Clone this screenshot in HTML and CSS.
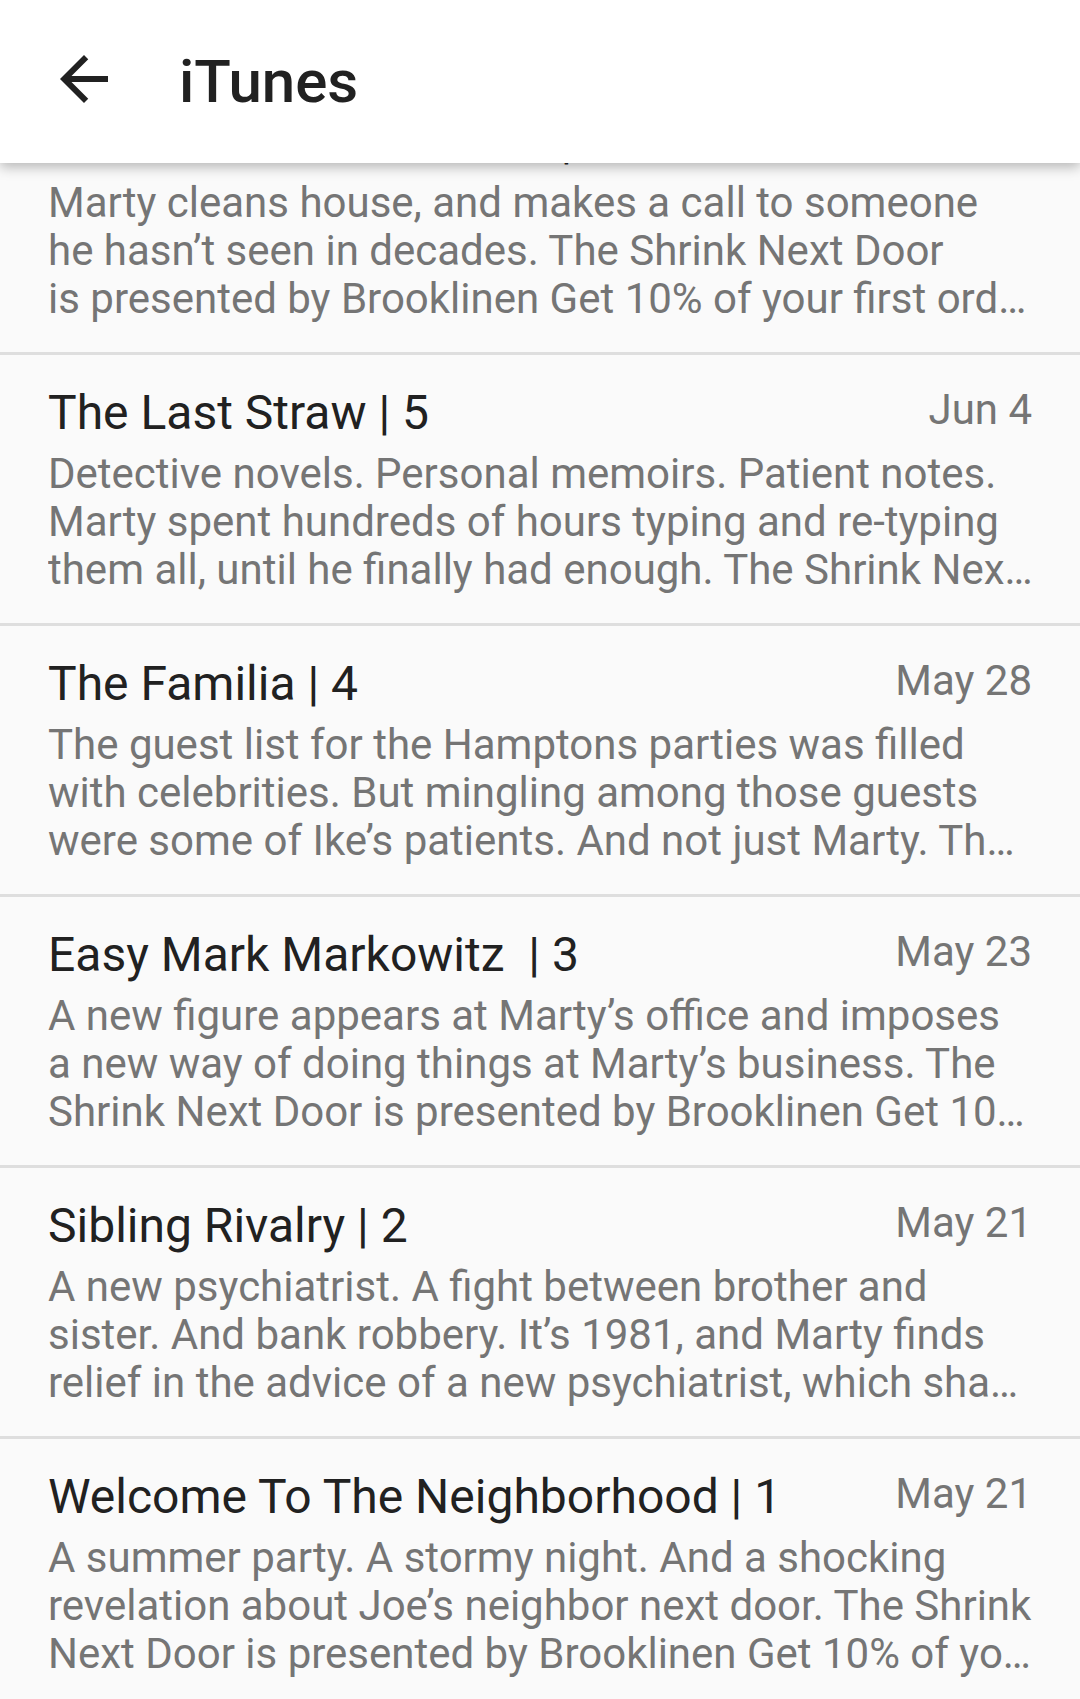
FILE: index.html
```html
<!DOCTYPE html>
<html lang="en">
<head>
<meta charset="utf-8">
<title>iTunes</title>
<link rel="stylesheet" href="styles.css">
</head>
<body>
<header class="toolbar">
  <button class="nav-btn" aria-label="Back">
    <svg viewBox="0 0 24 24" width="72" height="72" aria-hidden="true"><path d="M20 11H7.83l5.59-5.59L12 4l-8 8 8 8 1.41-1.41L7.83 13H20v-2z"/></svg>
  </button>
  <h1 class="toolbar-title">iTunes</h1>
</header>
<main class="episodes">
  <article class="episode">
    <div class="episode-head">
      <h2 class="episode-title">One Call From The Past | 6</h2>
      <span class="episode-date">Jun 11</span>
    </div>
    <p class="episode-desc">Marty cleans house, and makes a call to someone<br>he hasn’t seen in decades. The Shrink Next Door<br>is presented by Brooklinen Get 10% of your first ord…</p>
  </article>
  <article class="episode">
    <div class="episode-head">
      <h2 class="episode-title">The Last Straw | 5</h2>
      <span class="episode-date">Jun 4</span>
    </div>
    <p class="episode-desc">Detective novels. Personal memoirs. Patient notes.<br>Marty spent hundreds of hours typing and re-typing<br>them all, until he finally had enough. The Shrink Nex…</p>
  </article>
  <article class="episode">
    <div class="episode-head">
      <h2 class="episode-title">The Familia | 4</h2>
      <span class="episode-date">May 28</span>
    </div>
    <p class="episode-desc">The guest list for the Hamptons parties was filled<br>with celebrities. But mingling among those guests<br>were some of Ike’s patients. And not just Marty. Th…</p>
  </article>
  <article class="episode">
    <div class="episode-head">
      <h2 class="episode-title">Easy Mark Markowitz  | 3</h2>
      <span class="episode-date">May 23</span>
    </div>
    <p class="episode-desc">A new figure appears at Marty’s office and imposes<br>a new way of doing things at Marty’s business. The<br>Shrink Next Door is presented by Brooklinen Get 10…</p>
  </article>
  <article class="episode">
    <div class="episode-head">
      <h2 class="episode-title">Sibling Rivalry | 2</h2>
      <span class="episode-date">May 21</span>
    </div>
    <p class="episode-desc">A new psychiatrist. A fight between brother and<br>sister. And bank robbery. It’s 1981, and Marty finds<br>relief in the advice of a new psychiatrist, which sha…</p>
  </article>
  <article class="episode">
    <div class="episode-head">
      <h2 class="episode-title">Welcome To The Neighborhood | 1</h2>
      <span class="episode-date">May 21</span>
    </div>
    <p class="episode-desc">A summer party. A stormy night. And a shocking<br>revelation about Joe’s neighbor next door. The Shrink<br>Next Door is presented by Brooklinen Get 10% of yo…</p>
  </article>
</main>
</body>
</html>
```

FILE: styles.css
```css
html, body {
  margin: 0;
  padding: 0;
}

body {
  background: #fafafa;
  font-family: Roboto, "Noto Sans", "Liberation Sans", sans-serif;
  -webkit-font-smoothing: antialiased;
}

.toolbar {
  position: fixed;
  top: 0;
  left: 0;
  right: 0;
  z-index: 10;
  height: 163px;
  box-sizing: border-box;
  padding: 43px 0 0 48px;
  display: flex;
  align-items: flex-start;
  background: #ffffff;
  box-shadow: 0 4px 12px rgba(0, 0, 0, 0.28);
}

.nav-btn {
  width: 72px;
  height: 72px;
  padding: 0;
  margin: 0;
  border: 0;
  background: transparent;
  display: flex;
}

.nav-btn svg {
  display: block;
  fill: #212121;
}

.toolbar-title {
  margin: 4px 0 0 59px;
  font-size: 60px;
  line-height: 70px;
  font-weight: 500;
  color: #212121;
}

.episodes {
  padding-top: 81px;
}

.episode {
  border-top: 3px solid #dedede;
  padding: 30px 48px 29px;
}

.episode-head {
  display: flex;
  justify-content: space-between;
  align-items: flex-start;
  gap: 24px;
}

.episode-title {
  margin: 0;
  font-size: 48px;
  line-height: 56px;
  font-weight: 400;
  color: #212121;
  white-space: pre;
}

.episode-date {
  font-size: 42px;
  color: #757575;
  white-space: nowrap;
}

.episode-desc {
  margin: 9px 0 0;
  font-size: 42px;
  line-height: 48px;
  color: #757575;
  white-space: nowrap;
  overflow: hidden;
}
```
